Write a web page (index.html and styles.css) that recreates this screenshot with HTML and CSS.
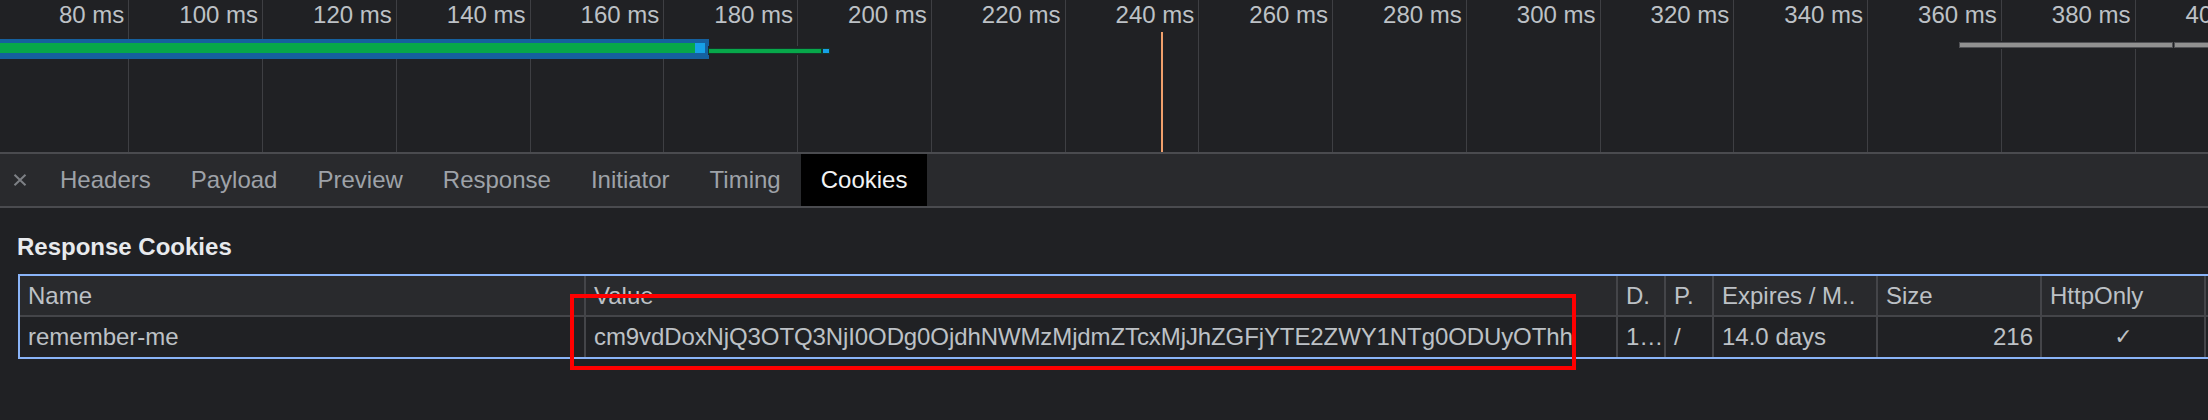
FILE: index.html
```html
<!DOCTYPE html>
<html lang="en">
<head>
<meta charset="utf-8">
<title>Network – Cookies</title>
<link rel="stylesheet" href="styles.css">
</head>
<body>
  <div class="timeline">
    <div class="ruler">
      <div class="tick"><span>80 ms</span></div>
      <div class="tick"><span>100 ms</span></div>
      <div class="tick"><span>120 ms</span></div>
      <div class="tick"><span>140 ms</span></div>
      <div class="tick"><span>160 ms</span></div>
      <div class="tick"><span>180 ms</span></div>
      <div class="tick"><span>200 ms</span></div>
      <div class="tick"><span>220 ms</span></div>
      <div class="tick"><span>240 ms</span></div>
      <div class="tick"><span>260 ms</span></div>
      <div class="tick"><span>280 ms</span></div>
      <div class="tick"><span>300 ms</span></div>
      <div class="tick"><span>320 ms</span></div>
      <div class="tick"><span>340 ms</span></div>
      <div class="tick"><span>360 ms</span></div>
      <div class="tick"><span>380 ms</span></div>
      <div class="tick"><span>400 ms</span></div>
    </div>
    <div class="bar-main" style="left:-10px;width:719px">
      <div class="bar-recv"></div>
      <div class="bar-dl"></div>
    </div>
    <div class="bar-thin" style="left:708px;width:122px">
      <div class="thin-line"></div>
      <div class="thin-sq"></div>
    </div>
    <div class="marker" style="left:1161px"></div>
    <div class="bar-gray" style="left:1958px">
      <div class="seg seg-a" style="width:214px"></div>
      <div class="seg seg-b"></div>
    </div>
  </div>

  <div class="tabbar">
    <div class="tab-close">
      <svg width="14" height="12" viewBox="0 0 14 12" aria-hidden="true">
        <path d="M1.5 0.8 L12.5 11.2 M12.5 0.8 L1.5 11.2" stroke="#7d8085" stroke-width="2" fill="none"/>
      </svg>
    </div>
    <div class="tab">Headers</div>
    <div class="tab">Payload</div>
    <div class="tab">Preview</div>
    <div class="tab">Response</div>
    <div class="tab">Initiator</div>
    <div class="tab">Timing</div>
    <div class="tab active">Cookies</div>
  </div>

  <div class="panel">
    <h2 class="section-title">Response Cookies</h2>
    <div class="cookie-table">
      <div class="row head">
        <div class="cell">Name</div>
        <div class="cell">Value</div>
        <div class="cell">D.</div>
        <div class="cell">P.</div>
        <div class="cell">Expires / M..</div>
        <div class="cell">Size</div>
        <div class="cell">HttpOnly</div>
        <div class="cell"></div>
      </div>
      <div class="row">
        <div class="cell">remember-me</div>
        <div class="cell value">cm9vdDoxNjQ3OTQ3NjI0ODg0OjdhNWMzMjdmZTcxMjJhZGFjYTE2ZWY1NTg0ODUyOThh</div>
        <div class="cell">1…</div>
        <div class="cell">/</div>
        <div class="cell">14.0 days</div>
        <div class="cell num">216</div>
        <div class="cell center check">✓</div>
        <div class="cell"></div>
      </div>
      <div class="highlight"></div>
    </div>
  </div>
</body>
</html>
```

FILE: styles.css
```css
html, body {
  margin: 0;
  padding: 0;
  width: 2208px;
  height: 420px;
  overflow: hidden;
  background: #202124;
}

body {
  font-family: "Liberation Sans", Arial, sans-serif;
  font-size: 24px;
  color: #bdc1c6;
}

/* ---------- timeline ---------- */
.timeline {
  position: relative;
  height: 152px;
  overflow: hidden;
}

.ruler {
  display: flex;
  height: 100%;
  margin-left: -4.45px;
}

.tick {
  flex: 0 0 133.75px;
  box-sizing: border-box;
  border-right: 1px solid #3e3f43;
  padding: 1px 4px 0 0;
  text-align: right;
  line-height: 28px;
  white-space: nowrap;
  color: #bdc1c6;
}

.bar-main {
  position: absolute;
  top: 39px;
  height: 20px;
  box-sizing: border-box;
  padding: 4px 4px 6px;
  background: #15609e;
  display: flex;
}

.bar-recv {
  flex: 1;
  background: #07a74a;
}

.bar-dl {
  flex: 0 0 10px;
  background: #16a0e6;
}

.bar-thin {
  position: absolute;
  top: 46px;
  height: 9px;
  background: #202124;
  display: flex;
  align-items: center;
  gap: 2px;
  padding-left: 1px;
  box-sizing: border-box;
}

.thin-line {
  width: 112px;
  height: 4px;
  background: #07a74a;
  box-shadow: 0 0 0 1px #16362a;
}

.thin-sq {
  width: 6px;
  height: 4px;
  background: #16a0e6;
  box-shadow: 0 0 0 1px #16362a;
}

.marker {
  position: absolute;
  top: 32px;
  width: 2px;
  height: 120px;
  background: #f0a06c;
}

.bar-gray {
  position: absolute;
  top: 41px;
  right: -20px;
  height: 8px;
  background: #202124;
  display: flex;
  align-items: center;
  gap: 1px;
  padding-left: 1px;
}

.seg {
  height: 6px;
  box-sizing: border-box;
  border: 1px solid #505155;
  background: #919191;
}

.seg-b {
  flex: 1;
}

/* ---------- tab bar ---------- */
.tabbar {
  display: flex;
  height: 52px;
  border-top: 2px solid #4a4b4f;
  border-bottom: 2px solid #4a4b4f;
  background: #292a2d;
  line-height: 52px;
  color: #9ea2a8;
}

.tab-close {
  width: 40px;
  display: flex;
  align-items: center;
  justify-content: center;
  margin-top: -1px;
}

.tab {
  padding: 0 20px;
  white-space: nowrap;
}

.tab.active {
  background: #000;
  color: #f1f3f4;
}

/* ---------- cookies panel ---------- */
.panel {
  padding-top: 25px;
}

.section-title {
  margin: 0 0 13px 17px;
  font-size: 24px;
  font-weight: bold;
  line-height: 28px;
  color: #e8eaed;
}

.cookie-table {
  position: relative;
  margin-left: 18px;
  width: max-content;
  border-top: 2px solid #8ab4f8;
  border-bottom: 2px solid #8ab4f8;
  border-left: 2px solid #8ab4f8;
}

.row {
  display: grid;
  grid-template-columns: 566px 1032px 48px 48px 164px 164px 164px 164px;
  height: 40px;
  line-height: 40px;
}

.row.head {
  height: 41px;
  line-height: 39px;
  background: #292a2d;
}

.cell {
  box-sizing: border-box;
  border-right: 2px solid #444549;
  padding: 0 7px 0 8px;
  white-space: nowrap;
  overflow: hidden;
  color: #bdc1c6;
}

.cell.value {
  letter-spacing: -0.1px;
}

.row.head .cell {
  border-bottom: 2px solid #444549;
}

.cell.num {
  text-align: right;
}

.cell.center {
  text-align: center;
}

.check {
  font-family: "DejaVu Sans", sans-serif;
  font-size: 22px;
}

.highlight {
  position: absolute;
  left: 550px;
  top: 18px;
  width: 1006px;
  height: 76px;
  box-sizing: border-box;
  border: 4px solid #ff0000;
}
```
